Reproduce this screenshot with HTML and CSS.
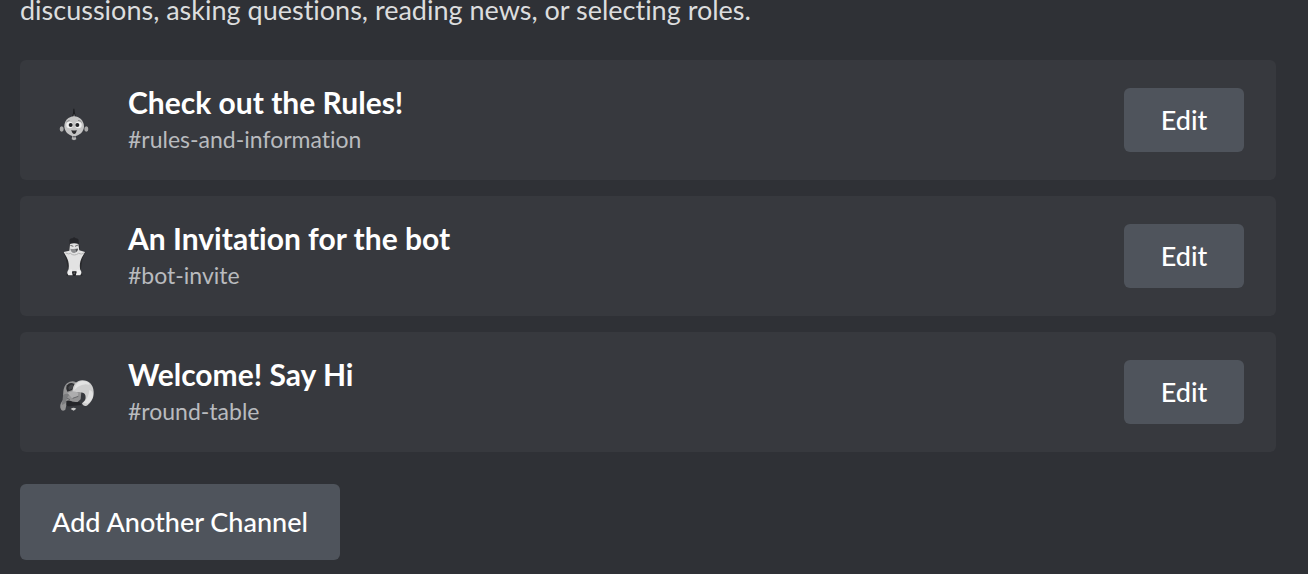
FILE: index.html
```html
<!DOCTYPE html>
<html lang="en">
<head>
<meta charset="utf-8">
<title>Welcome Screen</title>
<link rel="stylesheet" href="styles.css">
</head>
<body>
<main class="page">
  <p class="intro">discussions, asking questions, reading news, or selecting roles.</p>
  <ul class="channels">
    <li class="channel">
      <svg class="emoji" viewBox="6 -12 144 144" aria-hidden="true">
        <path d="M65 54L69 40L70 26H73L75 40L79 54Z" fill="#1c1d20"/>
        <path d="M68 53Q71 46 72 41Q75 47 77 53Z" fill="#66666a"/>
        <ellipse cx="35" cy="87" rx="6" ry="8" fill="#aaa"/>
        <ellipse cx="109" cy="87" rx="6" ry="8" fill="#aaa"/>
        <path d="M67 104H76L79 118Q72 123 65 118Z" fill="#b4b4b4"/>
        <path d="M68 107H77V112H68Z" fill="#55565a"/>
        <path d="M72 49C55 50 43 62 43 79C43 95 57 108 72 109C88 108 102 95 102 79C101 61 88 50 72 49Z" fill="#c5c5c5"/>
        <path d="M49 67Q52 62 59 61M84 61Q92 62 95 67" fill="none" stroke="#8c8c8c" stroke-width="3"/>
        <ellipse cx="59" cy="75" rx="10" ry="10" fill="#f0f0f0"/>
        <ellipse cx="85" cy="75" rx="10" ry="10" fill="#f0f0f0"/>
        <circle cx="62" cy="75" r="6" fill="#202124"/>
        <circle cx="82" cy="75" r="6" fill="#202124"/>
        <path d="M64 90Q72 93 80 90Q79 102 72 102Q66 101 64 90Z" fill="#2c2c2e"/>
      </svg>
      <div class="details">
        <h3 class="title">Check out the Rules!</h3>
        <p class="name">#rules-and-information</p>
      </div>
      <button class="button edit" type="button">Edit</button>
    </li>
    <li class="channel">
      <svg class="emoji" viewBox="6 6 144 144" aria-hidden="true">
        <path d="M59 37Q56 24 68 25Q72 18 77 25Q88 25 86 37L91 64L58 66Z" fill="#242529"/>
        <path d="M39 65L47 84L55 122L49 137H98L92 122L98 84L107 65L96 75H50Z" fill="#292a2d"/>
        <path d="M60 42Q72 37 85 42L88 61L105 66L96 82C90 94 87 108 92 124H54C59 108 56 94 50 82L41 66L58 62Z" fill="#e2e2e2"/>
        <path d="M61 46L70 49M75 49L84 45" fill="none" stroke="#666" stroke-width="3"/>
        <path d="M61 56Q72 58 84 55Q84 66 73 69Q62 68 61 56Z" fill="#8c8d8f"/>
        <path d="M76 58L84 57L80 66Z" fill="#4e4f51"/>
        <path d="M47 69Q57 74 61 70Q72 80 86 70Q94 75 102 69" fill="none" stroke="#b4b4b4" stroke-width="3"/>
        <path d="M53 122L65 118L70 136H55Q49 130 53 122Z" fill="#eee"/>
        <path d="M93 122L81 118L76 136H91Q97 130 93 122Z" fill="#eee"/>
        <path d="M66 125H80L77 137H68Z" fill="#242529"/>
        <circle cx="73" cy="130" r="3" fill="#555"/>
      </svg>
      <div class="details">
        <h3 class="title">An Invitation for the bot</h3>
        <p class="name">#bot-invite</p>
      </div>
      <button class="button edit" type="button">Edit</button>
    </li>
    <li class="channel">
      <svg class="emoji" viewBox="6 -6 144 144" aria-hidden="true">
        <path d="M51 40Q65 30 78 37L94 65L92 88L82 97L52 92L46 119Q35 128 31 113Q29 103 38 91L40 64Q42 48 51 40Z" fill="#949495"/>
        <path d="M51 46Q61 33 74 43L67 60L52 65Q46 54 51 46Z" fill="#2c2d30"/>
        <path d="M55 52Q62 40 71 45L67 56L57 60Z" fill="#444548"/>
        <path d="M39 75Q51 68 58 74L51 84L47 99L37 105Q33 100 39 91Z" fill="#7b7c7e"/>
        <path d="M53 69L69 62L85 68L83 80L66 85Z" fill="#adadae"/>
        <path d="M50 84L60 89M68 85L85 79" fill="none" stroke="#66676a" stroke-width="3"/>
        <path d="M49 93Q61 88 68 97L88 96L94 105L64 108Q49 112 49 101Z" fill="#242529"/>
        <path d="M62 117Q70 110 79 116L71 122Z" fill="#c9c9c9"/>
        <path d="M68 64C68 42 83 30 98 31C116 31 130 44 131 65C132 83 124 95 116 102C109 112 99 109 96 100C103 94 109 90 106 76C103 64 88 68 79 66Z" fill="#cecece"/>
        <path d="M75 49Q84 33 99 33Q115 33 119 44Q100 39 84 50Q78 55 72 60Z" fill="#e2e2e2"/>
        <path d="M118 60Q130 64 129 77Q127 91 113 101L100 98Q116 85 118 60Z" fill="#e2e2e2"/>
      </svg>
      <div class="details">
        <h3 class="title">Welcome! Say Hi</h3>
        <p class="name">#round-table</p>
      </div>
      <button class="button edit" type="button">Edit</button>
    </li>
  </ul>
  <button class="button add" type="button">Add Another Channel</button>
</main>
</body>
</html>
```
FILE: styles.css
```css
* {
  box-sizing: border-box;
}

body {
  margin: 0;
  background: #2f3136;
  color: #dcddde;
  font-family: Lato, "Noto Sans", sans-serif;
  font-variant-ligatures: none;
}

.page {
  padding: 0 32px 14px 20px;
}

.intro {
  margin: 0;
  padding-bottom: 40px;
  font-size: 27px;
  line-height: 20px;
}

.channels {
  display: grid;
  gap: 16px;
  margin: 0 0 32px;
  padding: 0;
  list-style: none;
}

.channel {
  display: flex;
  align-items: center;
  gap: 28px;
  padding: 22px 32px 24px;
  border-radius: 6px;
  background: #37393e;
}

.channel > .emoji,
.channel > .button {
  margin-top: 2px;
}

.emoji {
  flex: none;
  width: 48px;
  height: 48px;
}

.details {
  flex: 1;
  min-width: 0;
}

.title {
  margin: 0;
  color: #fff;
  font-size: 30px;
  font-weight: 700;
  line-height: 40px;
}

.name {
  margin: 0;
  color: #b9bbbe;
  font-size: 23px;
  line-height: 34px;
}

.button {
  border: 0;
  border-radius: 6px;
  background: #4f545c;
  color: #fff;
  font-family: inherit;
  font-size: 27px;
  font-weight: 500;
  font-variant-ligatures: none;
  line-height: 32px;
}

.edit {
  min-width: 120px;
  padding: 16px 32px;
}

.add {
  min-width: 320px;
  padding: 22px 32px;
}
```
